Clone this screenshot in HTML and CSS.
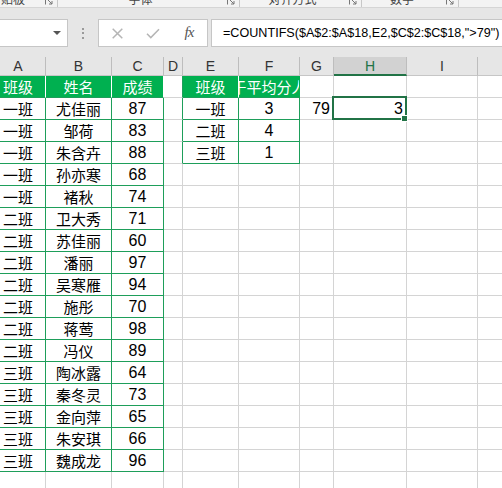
FILE: index.html
```html
<!DOCTYPE html>
<html lang="zh-CN">
<head>
    <meta charset="UTF-8">
    <title>COUNTIFS - 高于平均分人数</title>
    <link rel="stylesheet" href="styles.css">
</head>
<body>
    <!-- 功能区底部（被裁掉的分组标签） -->
    <div class="ribbon">
        <div class="group g1"><span class="label">剪贴板</span><svg class="launch" width="8" height="8" viewBox="0 0 8 8"><path d="M0.5 7.5V0.5H7.5M3 3L7 7M7 4V7H4"/></svg></div>
        <div class="group g2"><span class="label">字体</span><svg class="launch" width="8" height="8" viewBox="0 0 8 8"><path d="M0.5 7.5V0.5H7.5M3 3L7 7M7 4V7H4"/></svg></div>
        <div class="group g3"><span class="label">对齐方式</span><svg class="launch" width="8" height="8" viewBox="0 0 8 8"><path d="M0.5 7.5V0.5H7.5M3 3L7 7M7 4V7H4"/></svg></div>
        <div class="group g4"><span class="label">数字</span><svg class="launch" width="8" height="8" viewBox="0 0 8 8"><path d="M0.5 7.5V0.5H7.5M3 3L7 7M7 4V7H4"/></svg></div>
        <div class="group g5"></div>
    </div>

    <!-- 编辑栏 -->
    <div class="fbar">
        <div class="namebox"><span class="caret"></span></div>
        <div class="grip"><i></i><i></i><i></i></div>
        <div class="fbtns">
            <svg width="11" height="11" viewBox="0 0 11 11"><path d="M0.7 0.7L10.3 10.3M10.3 0.7L0.7 10.3"/></svg>
            <svg width="14" height="11" viewBox="0 0 14 11"><path d="M1 5.8L4.8 9.6L13 1.2"/></svg>
            <span class="fx">fx</span>
        </div>
        <div class="finput">=COUNTIFS($A$2:$A$18,E2,$C$2:$C$18,"&gt;79")</div>
    </div>

    <!-- 工作表 -->
    <div class="sheet">
        <div class="row colhead">
            <div>A</div><div>B</div><div>C</div><div>D</div><div>E</div><div>F</div><div>G</div><div class="on">H</div><div>I</div><div></div>
        </div>
        <div class="row">
            <div class="th">班级</div><div class="th">姓名</div><div class="th">成绩</div><div class="edge"></div><div class="th">班级</div><div class="th">高于平均分人数</div><div></div><div></div><div></div><div></div>
        </div>
        <div class="row">
            <div class="t">一班</div><div class="t">尤佳丽</div><div class="t n">87</div><div class="edge"></div><div class="t">一班</div><div class="t n">3</div><div class="r n">79</div><div class="r n sel">3</div><div></div><div></div>
        </div>
        <div class="row">
            <div class="t">一班</div><div class="t">邹荷</div><div class="t n">83</div><div class="edge"></div><div class="t">二班</div><div class="t n">4</div><div></div><div></div><div></div><div></div>
        </div>
        <div class="row">
            <div class="t">一班</div><div class="t">朱含卉</div><div class="t n">88</div><div class="edge"></div><div class="t">三班</div><div class="t n">1</div><div></div><div></div><div></div><div></div>
        </div>
        <div class="row">
            <div class="t">一班</div><div class="t">孙亦寒</div><div class="t n">68</div><div></div><div></div><div></div><div></div><div></div><div></div><div></div>
        </div>
        <div class="row">
            <div class="t">一班</div><div class="t">褚秋</div><div class="t n">74</div><div></div><div></div><div></div><div></div><div></div><div></div><div></div>
        </div>
        <div class="row">
            <div class="t">二班</div><div class="t">卫大秀</div><div class="t n">71</div><div></div><div></div><div></div><div></div><div></div><div></div><div></div>
        </div>
        <div class="row">
            <div class="t">二班</div><div class="t">苏佳丽</div><div class="t n">60</div><div></div><div></div><div></div><div></div><div></div><div></div><div></div>
        </div>
        <div class="row">
            <div class="t">二班</div><div class="t">潘丽</div><div class="t n">97</div><div></div><div></div><div></div><div></div><div></div><div></div><div></div>
        </div>
        <div class="row">
            <div class="t">二班</div><div class="t">吴寒雁</div><div class="t n">94</div><div></div><div></div><div></div><div></div><div></div><div></div><div></div>
        </div>
        <div class="row">
            <div class="t">二班</div><div class="t">施彤</div><div class="t n">70</div><div></div><div></div><div></div><div></div><div></div><div></div><div></div>
        </div>
        <div class="row">
            <div class="t">二班</div><div class="t">蒋莺</div><div class="t n">98</div><div></div><div></div><div></div><div></div><div></div><div></div><div></div>
        </div>
        <div class="row">
            <div class="t">二班</div><div class="t">冯仪</div><div class="t n">89</div><div></div><div></div><div></div><div></div><div></div><div></div><div></div>
        </div>
        <div class="row">
            <div class="t">三班</div><div class="t">陶冰露</div><div class="t n">64</div><div></div><div></div><div></div><div></div><div></div><div></div><div></div>
        </div>
        <div class="row">
            <div class="t">三班</div><div class="t">秦冬灵</div><div class="t n">73</div><div></div><div></div><div></div><div></div><div></div><div></div><div></div>
        </div>
        <div class="row">
            <div class="t">三班</div><div class="t">金向萍</div><div class="t n">65</div><div></div><div></div><div></div><div></div><div></div><div></div><div></div>
        </div>
        <div class="row">
            <div class="t">三班</div><div class="t">朱安琪</div><div class="t n">66</div><div></div><div></div><div></div><div></div><div></div><div></div><div></div>
        </div>
        <div class="row">
            <div class="t">三班</div><div class="t">魏成龙</div><div class="t n">96</div><div></div><div></div><div></div><div></div><div></div><div></div><div></div>
        </div>
        <div class="row">
            <div></div><div></div><div></div><div></div><div></div><div></div><div></div><div></div><div></div><div></div>
        </div>
    </div>
</body>
</html>
```

FILE: styles.css
```css
body {
    margin: 0;
    width: 502px;
    height: 488px;
    overflow: hidden;
    background: #fff;
    font-family: "Liberation Sans", "Noto Sans CJK SC", sans-serif;
}

/* ribbon tail */
.ribbon {
    display: flex;
    height: 7px;
    background: #f3f3f3;
    border-bottom: 1px solid #d5d5d5;
    overflow: hidden;
}
.group {
    position: relative;
    flex: none;
    display: flex;
    align-items: flex-end;
    justify-content: center;
    padding-right: 16px;
    box-sizing: border-box;
    border-right: 1px solid #c8c8c8;
}
.g1 { width: 58px; justify-content: flex-start; }
.g1 .label { margin-left: -11px; }
.g2 { width: 182px; }
.g3 { width: 122px; }
.g4 { width: 97px; }
.g5 { flex: 1; border-right: none; }
.label {
    font: 12px/12px "Noto Sans CJK SC", sans-serif;
    color: #444;
    white-space: nowrap;
    margin-bottom: 2px;
}
.launch {
    position: absolute;
    right: 4px;
    top: -3px;
    fill: none;
    stroke: #777;
    stroke-width: 1;
}

/* formula bar */
.fbar {
    display: flex;
    align-items: flex-start;
    height: 49px;
    padding-top: 11px;
    box-sizing: border-box;
    background: #e6e6e6;
}
.namebox {
    position: relative;
    width: 69px;
    height: 28px;
    margin-left: -1px;
    box-sizing: border-box;
    background: #fff;
    border: 1px solid #c6c6c6;
}
.caret {
    position: absolute;
    right: 6px;
    top: 11px;
    border-left: 4px solid transparent;
    border-right: 4px solid transparent;
    border-top: 4px solid #555;
}
.grip {
    width: 30px;
    height: 28px;
    display: flex;
    flex-direction: column;
    align-items: center;
    justify-content: center;
    gap: 2.5px;
}
.grip i {
    width: 2px;
    height: 2px;
    background: #9a9a9a;
}
.fbtns {
    width: 110px;
    height: 28px;
    box-sizing: border-box;
    background: #fff;
    border: 1px solid #c6c6c6;
    display: grid;
    grid-template-columns: 36px 36px 36px;
    align-items: center;
    justify-items: center;
}
.fbtns svg {
    fill: none;
    stroke: #b5b5b5;
    stroke-width: 1.5;
}
.fx {
    font: italic 15px "Liberation Serif", serif;
    color: #555;
    letter-spacing: -1px;
    margin-top: -2px;
}
.finput {
    flex: 1;
    height: 28px;
    margin-left: 3px;
    padding-left: 11px;
    box-sizing: border-box;
    background: #fff;
    border: 1px solid #c6c6c6;
    border-right: none;
    font-size: 12.6px;
    line-height: 26px;
    color: #000;
    white-space: nowrap;
    overflow: hidden;
}

/* sheet grid */
.sheet {
    margin-left: -9px;
}
.row {
    display: grid;
    grid-template-columns: 55px 66px 52px 19px 56px 61px 34px 73px 71px 80px;
    height: 22px;
}
.row > div {
    box-sizing: border-box;
    display: flex;
    align-items: center;
    justify-content: center;
    border-right: 1px solid #d4d4d4;
    border-bottom: 1px solid #d4d4d4;
    white-space: nowrap;
    overflow: hidden;
    font: 15px "Noto Sans CJK SC", sans-serif;
    color: #000;
}
.colhead {
    height: 19px;
}
.colhead > div {
    background: #e6e6e6;
    border-right-color: #bdbdbd;
    border-bottom-color: #c6c6c6;
    font: 14px "Liberation Sans", sans-serif;
    color: #333;
}
.colhead > div.on {
    background: #d2d2d2;
    color: #217346;
    border-bottom: 2px solid #217346;
}

.row > .t {
    border-right-color: #1e9e5a;
    border-bottom-color: #1e9e5a;
}
.row > .th {
    background: #00b050;
    color: #fff;
    border-right-color: #fff;
    border-bottom-color: #1e9e5a;
}
.row > .th:nth-child(6) {
    border-right-color: #00b050;
}
.row > .edge {
    border-right-color: #1e9e5a;
}
.row > .n {
    font: 16px "Liberation Sans", sans-serif;
}
.row > .r {
    justify-content: flex-end;
    padding-right: 3px;
}

/* active cell */
.row > .sel {
    position: relative;
    overflow: visible;
}
.sel::before {
    content: "";
    position: absolute;
    left: -2px;
    top: -2px;
    right: -1px;
    bottom: -1px;
    border: 2px solid #217346;
    z-index: 1;
}
.sel::after {
    content: "";
    position: absolute;
    right: -2px;
    bottom: -3px;
    width: 5px;
    height: 5px;
    background: #217346;
    border: 1px solid #fff;
    z-index: 2;
}
```
